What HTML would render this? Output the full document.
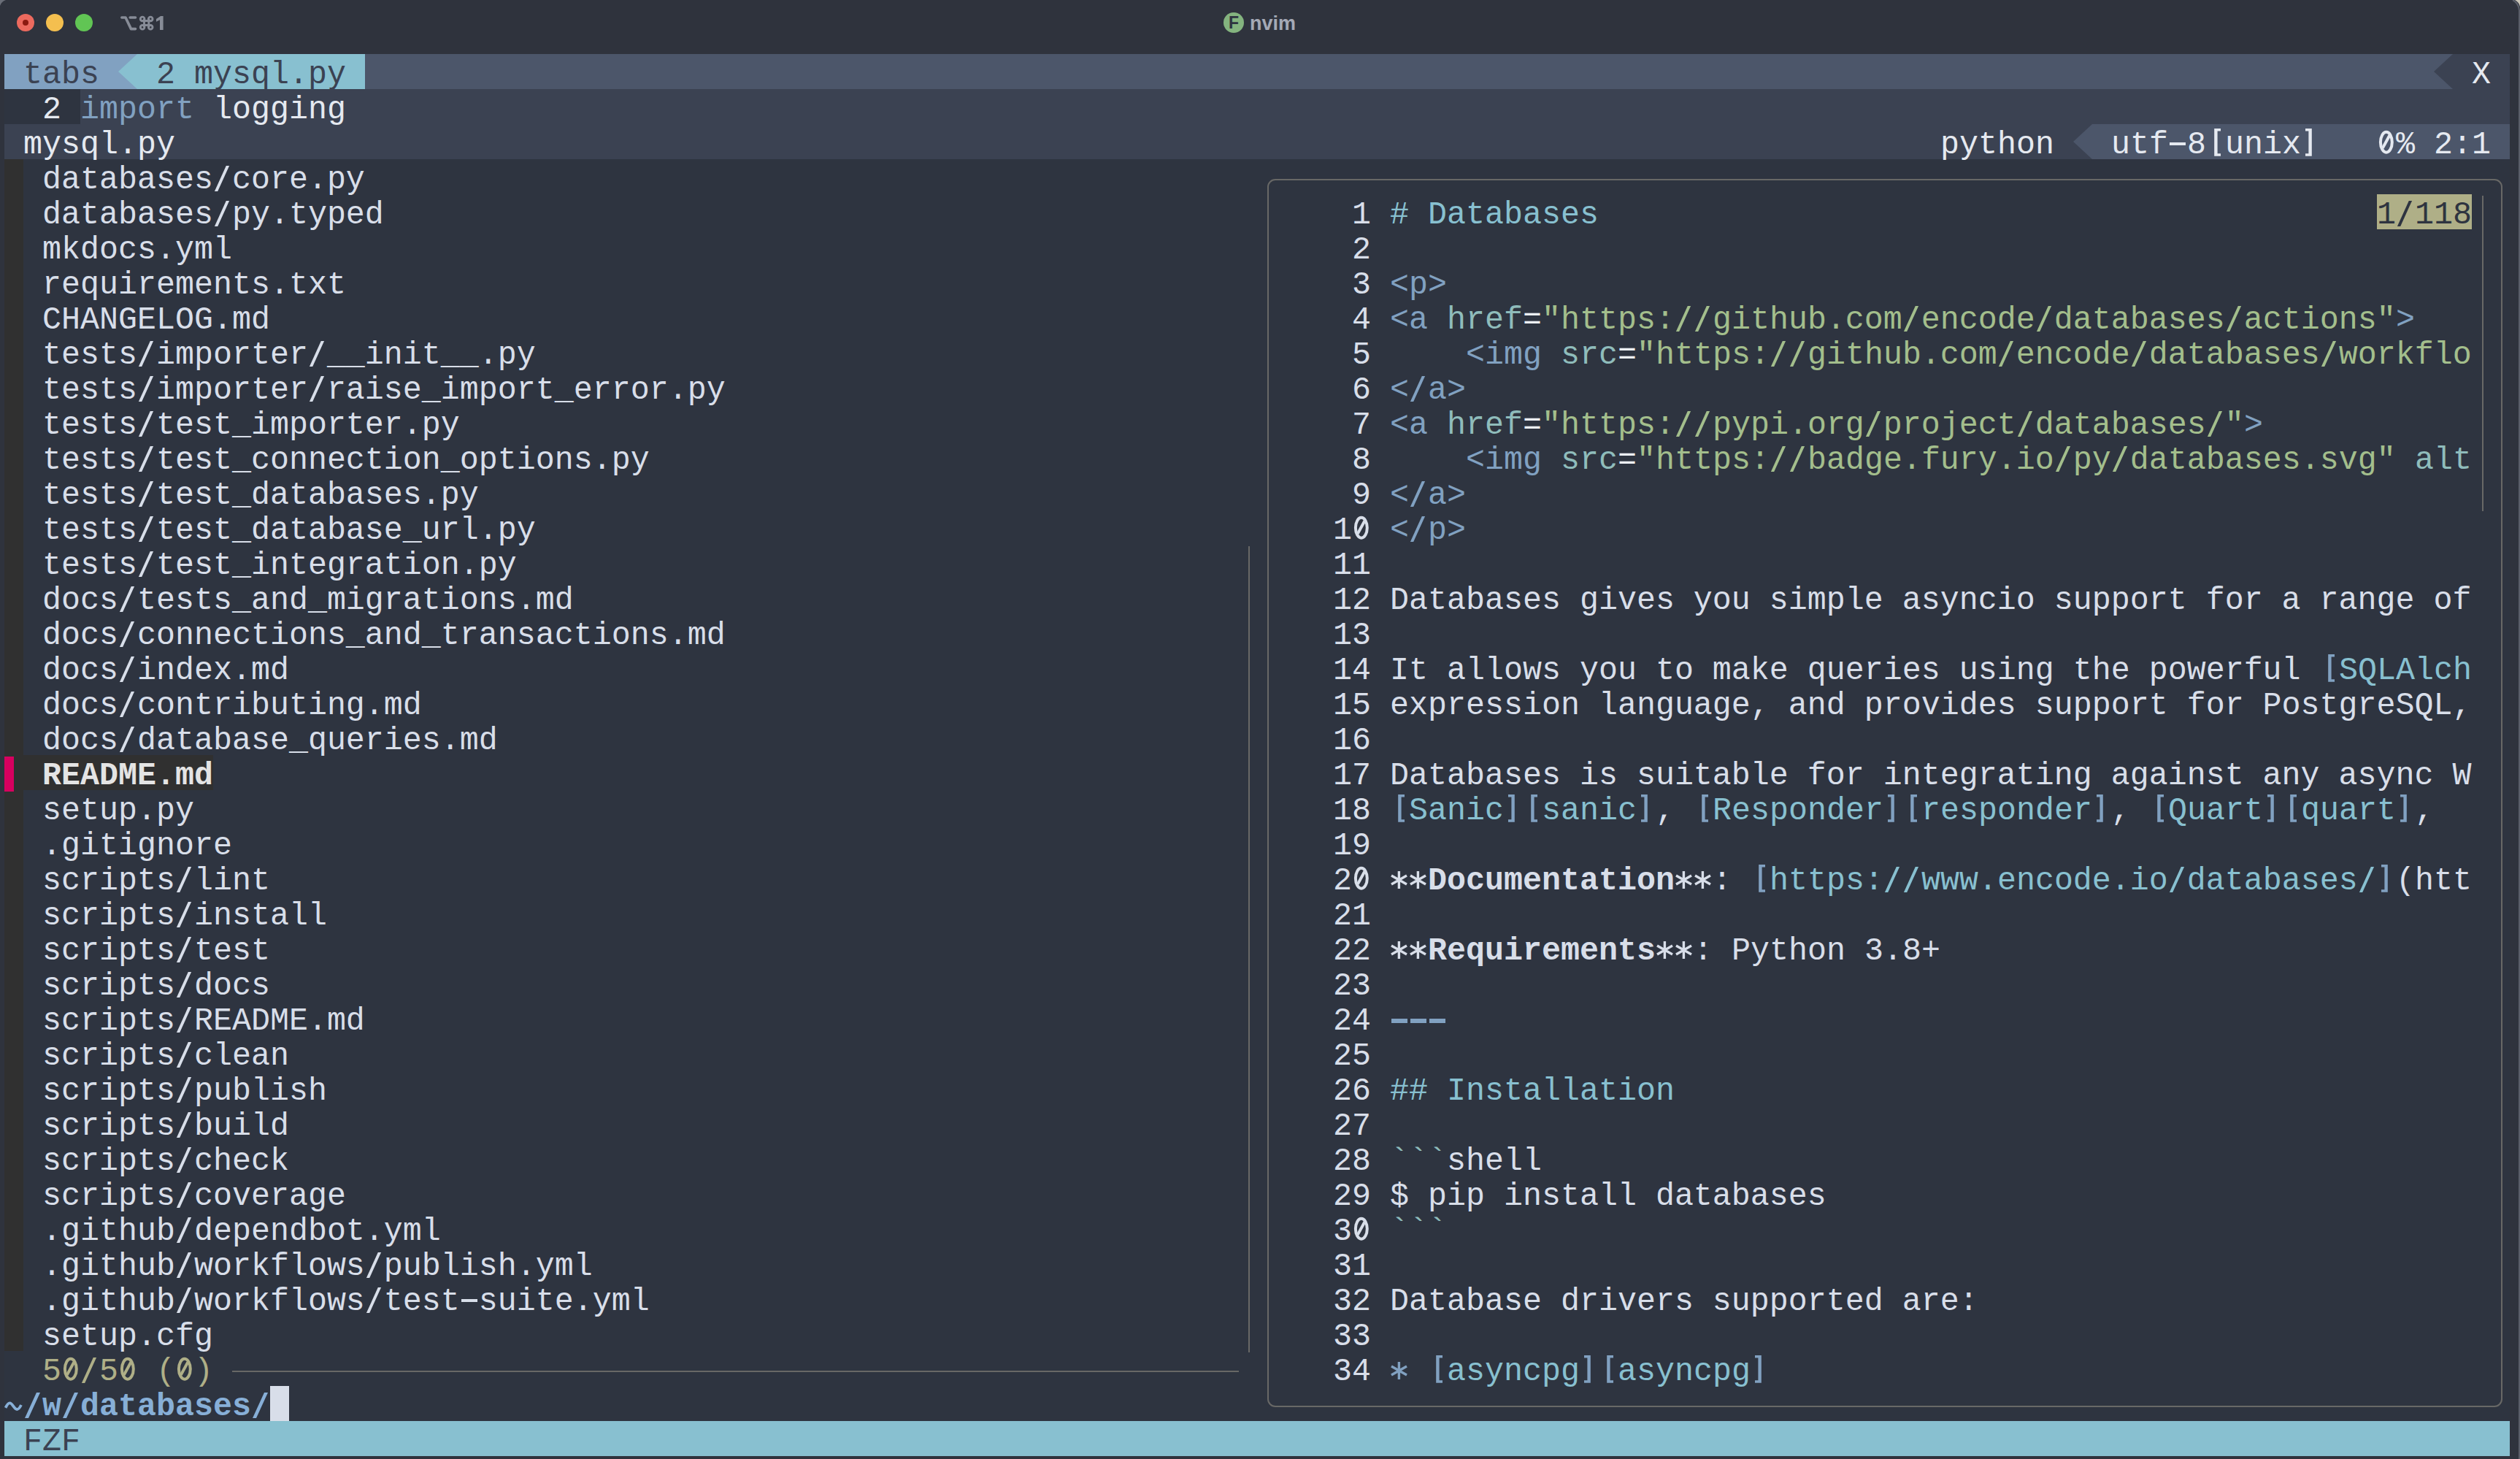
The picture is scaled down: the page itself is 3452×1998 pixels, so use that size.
<!DOCTYPE html>
<html><head><meta charset="utf-8"><title>nvim</title>
<style>
html,body{margin:0;padding:0;}
body{width:3452px;height:1998px;overflow:hidden;background:#2f333d;position:relative;}
#term{position:absolute;left:6px;top:74px;width:3432px;height:1920px;background:#2e3440;overflow:hidden;}
.b{position:absolute;height:48px;}
.t{position:absolute;white-space:pre;font-family:"Liberation Mono",monospace;font-size:43.326px;line-height:48px;height:48px;transform:scaleY(1.030);transform-origin:0 35.5px;}
.bd{font-weight:bold;}
.ln{position:absolute;background:#686866;}
</style></head><body>

<div style="position:absolute;left:23px;top:19px;width:24px;height:24px;border-radius:50%;background:#ec6a5e;"></div>
<div style="position:absolute;left:31px;top:27px;width:8px;height:8px;border-radius:50%;background:#8c1a10;"></div>
<div style="position:absolute;left:63px;top:19px;width:24px;height:24px;border-radius:50%;background:#f4bf4f;"></div>
<div style="position:absolute;left:103px;top:19px;width:24px;height:24px;border-radius:50%;background:#61c554;"></div>

<div style="position:absolute;left:3450px;top:14px;width:2px;height:1984px;background:#5a5e69"></div>
<svg style="position:absolute;left:3432px;top:0" width="20" height="20" viewBox="0 0 20 20"><path d="M13 0 Q18.5 3 20 9 L20 0 Z" fill="#c9c5b9"/><path d="M10 0 Q18 4 19 14" stroke="#5a5e69" stroke-width="2" fill="none"/></svg>
<svg style="position:absolute;left:0;top:0" width="12" height="12" viewBox="0 0 12 12"><path d="M0 0 L8 0 Q2 2 0 8 Z" fill="#6a6e78"/></svg>
<div style="position:absolute;left:1676px;top:17px;width:28px;height:28px;border-radius:50%;background:#84b47f;"></div>
<div style="position:absolute;left:1676px;top:17px;width:28px;text-align:center;font-family:'Liberation Sans',sans-serif;font-weight:bold;font-size:23px;line-height:29px;color:#2e3440;">F</div>
<div style="position:absolute;left:1712px;top:13px;font-family:'Liberation Sans',sans-serif;font-weight:bold;font-size:27px;line-height:38px;color:#a4a9b6;">nvim</div>
<svg style="position:absolute;left:160px;top:16px" width="70" height="32" viewBox="0 0 70 32">
<g fill="none" stroke="#878c97" stroke-width="3.6" stroke-linecap="round" stroke-linejoin="round">
<path d="M6.8 8 H12 L19.5 23.6 H25.5 M18.2 8 H25.5"/>
</g>
<g fill="none" stroke="#878c97" stroke-width="2.9">
<path d="M35.1 12.44 H46.2 M35.1 18.56 H46.2 M37.5 9.94 V21.3 M43.8 9.94 V21.3"/>
<circle cx="35.1" cy="9.94" r="2.8"/><circle cx="46.2" cy="9.94" r="2.8"/><circle cx="35.1" cy="21.3" r="2.8"/><circle cx="46.2" cy="21.3" r="2.8"/>
</g>
<path d="M54 10 L60 6 H63.6 V24.9 H59 V11.2 L54 13.8 Z" fill="#878c97"/>
</svg>

<div id="term">
<div class="b" style="left:0px;top:0px;width:182px;background:#81a1c1"></div>
<div class="b" style="left:182px;top:0px;width:312px;background:#88c0d0"></div>
<div class="b" style="left:494px;top:0px;width:2860px;background:#4c566a"></div>
<div class="b" style="left:3354px;top:0px;width:78px;background:#3b4252"></div>
<div class="b" style="left:104px;top:48px;width:3328px;background:#3b4252"></div>
<div class="b" style="left:0px;top:96px;width:2860px;background:#3b4252"></div>
<div class="b" style="left:2860px;top:96px;width:572px;background:#4c566a"></div>
<div class="b" style="left:0px;top:144px;width:26px;background:#303030"></div>
<div class="b" style="left:0px;top:192px;width:26px;background:#303030"></div>
<div class="b" style="left:0px;top:240px;width:26px;background:#303030"></div>
<div class="b" style="left:0px;top:288px;width:26px;background:#303030"></div>
<div class="b" style="left:0px;top:336px;width:26px;background:#303030"></div>
<div class="b" style="left:0px;top:384px;width:26px;background:#303030"></div>
<div class="b" style="left:0px;top:432px;width:26px;background:#303030"></div>
<div class="b" style="left:0px;top:480px;width:26px;background:#303030"></div>
<div class="b" style="left:0px;top:528px;width:26px;background:#303030"></div>
<div class="b" style="left:0px;top:576px;width:26px;background:#303030"></div>
<div class="b" style="left:0px;top:624px;width:26px;background:#303030"></div>
<div class="b" style="left:0px;top:672px;width:26px;background:#303030"></div>
<div class="b" style="left:0px;top:720px;width:26px;background:#303030"></div>
<div class="b" style="left:0px;top:768px;width:26px;background:#303030"></div>
<div class="b" style="left:0px;top:816px;width:26px;background:#303030"></div>
<div class="b" style="left:0px;top:864px;width:26px;background:#303030"></div>
<div class="b" style="left:0px;top:912px;width:26px;background:#303030"></div>
<div class="b" style="left:0px;top:960px;width:26px;background:#303030"></div>
<div class="b" style="left:26px;top:960px;width:260px;background:#303030"></div>
<div class="b" style="left:0px;top:1008px;width:26px;background:#303030"></div>
<div class="b" style="left:0px;top:1056px;width:26px;background:#303030"></div>
<div class="b" style="left:0px;top:1104px;width:26px;background:#303030"></div>
<div class="b" style="left:0px;top:1152px;width:26px;background:#303030"></div>
<div class="b" style="left:0px;top:1200px;width:26px;background:#303030"></div>
<div class="b" style="left:0px;top:1248px;width:26px;background:#303030"></div>
<div class="b" style="left:0px;top:1296px;width:26px;background:#303030"></div>
<div class="b" style="left:0px;top:1344px;width:26px;background:#303030"></div>
<div class="b" style="left:0px;top:1392px;width:26px;background:#303030"></div>
<div class="b" style="left:0px;top:1440px;width:26px;background:#303030"></div>
<div class="b" style="left:0px;top:1488px;width:26px;background:#303030"></div>
<div class="b" style="left:0px;top:1536px;width:26px;background:#303030"></div>
<div class="b" style="left:0px;top:1584px;width:26px;background:#303030"></div>
<div class="b" style="left:0px;top:1632px;width:26px;background:#303030"></div>
<div class="b" style="left:0px;top:1680px;width:26px;background:#303030"></div>
<div class="b" style="left:0px;top:1728px;width:26px;background:#303030"></div>
<div class="b" style="left:364px;top:1824px;width:26px;background:#d8dee9"></div>
<div class="b" style="left:0px;top:1872px;width:3432px;background:#88c0d0"></div>
<div class="b" style="left:3250px;top:192px;width:130px;background:#afaf87"></div>
<div class="t" style="left:0px;top:4.5px;color:#3b4252"> tabs </div>
<div class="t" style="left:182px;top:4.5px;color:#3b4252"> 2 mysql.py </div>
<div class="t" style="left:3380px;top:4.5px;color:#e5e9f0">X</div>
<div class="t" style="left:52px;top:52.5px;color:#e5e9f0">2</div>
<div class="t" style="left:104px;top:52.5px;color:#81a1c1">import</div>
<div class="t" style="left:286px;top:52.5px;color:#e5e9f0">logging</div>
<div class="t" style="left:26px;top:100.5px;color:#e5e9f0">mysql.py</div>
<div class="t" style="left:2652px;top:100.5px;color:#e5e9f0">python</div>
<div style="position:absolute;left:2966px;top:121px;width:22px;height:4px;background:#e5e9f0"></div>
<svg style="position:absolute;left:3016px;top:96px" width="26" height="48" viewBox="0 0 26 48"><path d="M11.2 6 H20 V9.5 H15.6 V40.3 H20 V43.8 H11.2 Z" fill="#e5e9f0"/></svg>
<svg style="position:absolute;left:3146px;top:96px" width="26" height="48" viewBox="0 0 26 48"><path d="M14.8 6 H6 V9.5 H10.4 V40.3 H6 V43.8 H14.8 Z" fill="#e5e9f0"/></svg>
<div class="t" style="left:2886px;top:100.5px;color:#e5e9f0">utf 8 unix </div>
<svg style="position:absolute;left:3250px;top:96px" width="26" height="48" viewBox="0 0 26 48"><g stroke="#e5e9f0" stroke-width="4" fill="none"><ellipse cx="12.85" cy="24.75" rx="7.95" ry="13.95"/><path d="M17.3 15.5 L7.8 32.9"/></g></svg>
<div class="t" style="left:3250px;top:100.5px;color:#e5e9f0"> % 2:1</div>
<svg style="position:absolute;left:286px;top:144px" width="26" height="48" viewBox="0 0 26 48"><polygon points="1.9,44.1 6.2,44.1 22.1,8.9 17.8,8.9" fill="#d8dee9"/></svg>
<div class="t" style="left:52px;top:148.5px;color:#d8dee9">databases core.py</div>
<svg style="position:absolute;left:286px;top:192px" width="26" height="48" viewBox="0 0 26 48"><polygon points="1.9,44.1 6.2,44.1 22.1,8.9 17.8,8.9" fill="#d8dee9"/></svg>
<div class="t" style="left:52px;top:196.5px;color:#d8dee9">databases py.typed</div>
<div class="t" style="left:52px;top:244.5px;color:#d8dee9">mkdocs.yml</div>
<div class="t" style="left:52px;top:292.5px;color:#d8dee9">requirements.txt</div>
<div class="t" style="left:52px;top:340.5px;color:#d8dee9">CHANGELOG.md</div>
<svg style="position:absolute;left:182px;top:384px" width="26" height="48" viewBox="0 0 26 48"><polygon points="1.9,44.1 6.2,44.1 22.1,8.9 17.8,8.9" fill="#d8dee9"/></svg>
<svg style="position:absolute;left:416px;top:384px" width="26" height="48" viewBox="0 0 26 48"><polygon points="1.9,44.1 6.2,44.1 22.1,8.9 17.8,8.9" fill="#d8dee9"/></svg>
<div class="t" style="left:52px;top:388.5px;color:#d8dee9">tests importer __init__.py</div>
<svg style="position:absolute;left:182px;top:432px" width="26" height="48" viewBox="0 0 26 48"><polygon points="1.9,44.1 6.2,44.1 22.1,8.9 17.8,8.9" fill="#d8dee9"/></svg>
<svg style="position:absolute;left:416px;top:432px" width="26" height="48" viewBox="0 0 26 48"><polygon points="1.9,44.1 6.2,44.1 22.1,8.9 17.8,8.9" fill="#d8dee9"/></svg>
<div class="t" style="left:52px;top:436.5px;color:#d8dee9">tests importer raise_import_error.py</div>
<svg style="position:absolute;left:182px;top:480px" width="26" height="48" viewBox="0 0 26 48"><polygon points="1.9,44.1 6.2,44.1 22.1,8.9 17.8,8.9" fill="#d8dee9"/></svg>
<div class="t" style="left:52px;top:484.5px;color:#d8dee9">tests test_importer.py</div>
<svg style="position:absolute;left:182px;top:528px" width="26" height="48" viewBox="0 0 26 48"><polygon points="1.9,44.1 6.2,44.1 22.1,8.9 17.8,8.9" fill="#d8dee9"/></svg>
<div class="t" style="left:52px;top:532.5px;color:#d8dee9">tests test_connection_options.py</div>
<svg style="position:absolute;left:182px;top:576px" width="26" height="48" viewBox="0 0 26 48"><polygon points="1.9,44.1 6.2,44.1 22.1,8.9 17.8,8.9" fill="#d8dee9"/></svg>
<div class="t" style="left:52px;top:580.5px;color:#d8dee9">tests test_databases.py</div>
<svg style="position:absolute;left:182px;top:624px" width="26" height="48" viewBox="0 0 26 48"><polygon points="1.9,44.1 6.2,44.1 22.1,8.9 17.8,8.9" fill="#d8dee9"/></svg>
<div class="t" style="left:52px;top:628.5px;color:#d8dee9">tests test_database_url.py</div>
<svg style="position:absolute;left:182px;top:672px" width="26" height="48" viewBox="0 0 26 48"><polygon points="1.9,44.1 6.2,44.1 22.1,8.9 17.8,8.9" fill="#d8dee9"/></svg>
<div class="t" style="left:52px;top:676.5px;color:#d8dee9">tests test_integration.py</div>
<svg style="position:absolute;left:156px;top:720px" width="26" height="48" viewBox="0 0 26 48"><polygon points="1.9,44.1 6.2,44.1 22.1,8.9 17.8,8.9" fill="#d8dee9"/></svg>
<div class="t" style="left:52px;top:724.5px;color:#d8dee9">docs tests_and_migrations.md</div>
<svg style="position:absolute;left:156px;top:768px" width="26" height="48" viewBox="0 0 26 48"><polygon points="1.9,44.1 6.2,44.1 22.1,8.9 17.8,8.9" fill="#d8dee9"/></svg>
<div class="t" style="left:52px;top:772.5px;color:#d8dee9">docs connections_and_transactions.md</div>
<svg style="position:absolute;left:156px;top:816px" width="26" height="48" viewBox="0 0 26 48"><polygon points="1.9,44.1 6.2,44.1 22.1,8.9 17.8,8.9" fill="#d8dee9"/></svg>
<div class="t" style="left:52px;top:820.5px;color:#d8dee9">docs index.md</div>
<svg style="position:absolute;left:156px;top:864px" width="26" height="48" viewBox="0 0 26 48"><polygon points="1.9,44.1 6.2,44.1 22.1,8.9 17.8,8.9" fill="#d8dee9"/></svg>
<div class="t" style="left:52px;top:868.5px;color:#d8dee9">docs contributing.md</div>
<svg style="position:absolute;left:156px;top:912px" width="26" height="48" viewBox="0 0 26 48"><polygon points="1.9,44.1 6.2,44.1 22.1,8.9 17.8,8.9" fill="#d8dee9"/></svg>
<div class="t" style="left:52px;top:916.5px;color:#d8dee9">docs database_queries.md</div>
<div class="t bd" style="left:52px;top:964.5px;color:#e4e4e4">README.md</div>
<div class="t" style="left:52px;top:1012.5px;color:#d8dee9">setup.py</div>
<div class="t" style="left:52px;top:1060.5px;color:#d8dee9">.gitignore</div>
<svg style="position:absolute;left:234px;top:1104px" width="26" height="48" viewBox="0 0 26 48"><polygon points="1.9,44.1 6.2,44.1 22.1,8.9 17.8,8.9" fill="#d8dee9"/></svg>
<div class="t" style="left:52px;top:1108.5px;color:#d8dee9">scripts lint</div>
<svg style="position:absolute;left:234px;top:1152px" width="26" height="48" viewBox="0 0 26 48"><polygon points="1.9,44.1 6.2,44.1 22.1,8.9 17.8,8.9" fill="#d8dee9"/></svg>
<div class="t" style="left:52px;top:1156.5px;color:#d8dee9">scripts install</div>
<svg style="position:absolute;left:234px;top:1200px" width="26" height="48" viewBox="0 0 26 48"><polygon points="1.9,44.1 6.2,44.1 22.1,8.9 17.8,8.9" fill="#d8dee9"/></svg>
<div class="t" style="left:52px;top:1204.5px;color:#d8dee9">scripts test</div>
<svg style="position:absolute;left:234px;top:1248px" width="26" height="48" viewBox="0 0 26 48"><polygon points="1.9,44.1 6.2,44.1 22.1,8.9 17.8,8.9" fill="#d8dee9"/></svg>
<div class="t" style="left:52px;top:1252.5px;color:#d8dee9">scripts docs</div>
<svg style="position:absolute;left:234px;top:1296px" width="26" height="48" viewBox="0 0 26 48"><polygon points="1.9,44.1 6.2,44.1 22.1,8.9 17.8,8.9" fill="#d8dee9"/></svg>
<div class="t" style="left:52px;top:1300.5px;color:#d8dee9">scripts README.md</div>
<svg style="position:absolute;left:234px;top:1344px" width="26" height="48" viewBox="0 0 26 48"><polygon points="1.9,44.1 6.2,44.1 22.1,8.9 17.8,8.9" fill="#d8dee9"/></svg>
<div class="t" style="left:52px;top:1348.5px;color:#d8dee9">scripts clean</div>
<svg style="position:absolute;left:234px;top:1392px" width="26" height="48" viewBox="0 0 26 48"><polygon points="1.9,44.1 6.2,44.1 22.1,8.9 17.8,8.9" fill="#d8dee9"/></svg>
<div class="t" style="left:52px;top:1396.5px;color:#d8dee9">scripts publish</div>
<svg style="position:absolute;left:234px;top:1440px" width="26" height="48" viewBox="0 0 26 48"><polygon points="1.9,44.1 6.2,44.1 22.1,8.9 17.8,8.9" fill="#d8dee9"/></svg>
<div class="t" style="left:52px;top:1444.5px;color:#d8dee9">scripts build</div>
<svg style="position:absolute;left:234px;top:1488px" width="26" height="48" viewBox="0 0 26 48"><polygon points="1.9,44.1 6.2,44.1 22.1,8.9 17.8,8.9" fill="#d8dee9"/></svg>
<div class="t" style="left:52px;top:1492.5px;color:#d8dee9">scripts check</div>
<svg style="position:absolute;left:234px;top:1536px" width="26" height="48" viewBox="0 0 26 48"><polygon points="1.9,44.1 6.2,44.1 22.1,8.9 17.8,8.9" fill="#d8dee9"/></svg>
<div class="t" style="left:52px;top:1540.5px;color:#d8dee9">scripts coverage</div>
<svg style="position:absolute;left:234px;top:1584px" width="26" height="48" viewBox="0 0 26 48"><polygon points="1.9,44.1 6.2,44.1 22.1,8.9 17.8,8.9" fill="#d8dee9"/></svg>
<div class="t" style="left:52px;top:1588.5px;color:#d8dee9">.github dependbot.yml</div>
<svg style="position:absolute;left:234px;top:1632px" width="26" height="48" viewBox="0 0 26 48"><polygon points="1.9,44.1 6.2,44.1 22.1,8.9 17.8,8.9" fill="#d8dee9"/></svg>
<svg style="position:absolute;left:494px;top:1632px" width="26" height="48" viewBox="0 0 26 48"><polygon points="1.9,44.1 6.2,44.1 22.1,8.9 17.8,8.9" fill="#d8dee9"/></svg>
<div class="t" style="left:52px;top:1636.5px;color:#d8dee9">.github workflows publish.yml</div>
<svg style="position:absolute;left:234px;top:1680px" width="26" height="48" viewBox="0 0 26 48"><polygon points="1.9,44.1 6.2,44.1 22.1,8.9 17.8,8.9" fill="#d8dee9"/></svg>
<svg style="position:absolute;left:494px;top:1680px" width="26" height="48" viewBox="0 0 26 48"><polygon points="1.9,44.1 6.2,44.1 22.1,8.9 17.8,8.9" fill="#d8dee9"/></svg>
<div style="position:absolute;left:626px;top:1705px;width:22px;height:4px;background:#d8dee9"></div>
<div class="t" style="left:52px;top:1684.5px;color:#d8dee9">.github workflows test suite.yml</div>
<div class="t" style="left:52px;top:1732.5px;color:#d8dee9">setup.cfg</div>
<svg style="position:absolute;left:78px;top:1776px" width="26" height="48" viewBox="0 0 26 48"><g stroke="#afaf87" stroke-width="4" fill="none"><ellipse cx="12.85" cy="24.75" rx="7.95" ry="13.95"/><path d="M17.3 15.5 L7.8 32.9"/></g></svg>
<svg style="position:absolute;left:104px;top:1776px" width="26" height="48" viewBox="0 0 26 48"><polygon points="1.9,44.1 6.2,44.1 22.1,8.9 17.8,8.9" fill="#afaf87"/></svg>
<svg style="position:absolute;left:156px;top:1776px" width="26" height="48" viewBox="0 0 26 48"><g stroke="#afaf87" stroke-width="4" fill="none"><ellipse cx="12.85" cy="24.75" rx="7.95" ry="13.95"/><path d="M17.3 15.5 L7.8 32.9"/></g></svg>
<svg style="position:absolute;left:234px;top:1776px" width="26" height="48" viewBox="0 0 26 48"><g stroke="#afaf87" stroke-width="4" fill="none"><ellipse cx="12.85" cy="24.75" rx="7.95" ry="13.95"/><path d="M17.3 15.5 L7.8 32.9"/></g></svg>
<div class="t" style="left:52px;top:1780.5px;color:#afaf87">5  5  ( )</div>
<svg style="position:absolute;left:0px;top:1824px;overflow:visible" width="26" height="48" viewBox="0 0 26 48"><path d="M1.6 29.9 C4 25 5.5 23.4 7.4 23.4 C11 23.4 13.5 32 17.3 32 C19.5 32 21.5 29 23 26" stroke="#87afd7" stroke-width="3.8" fill="none"/></svg>
<svg style="position:absolute;left:26px;top:1824px" width="26" height="48" viewBox="0 0 26 48"><polygon points="2,44.1 7,44.1 23,8.9 18,8.9" fill="#87afd7"/></svg>
<svg style="position:absolute;left:78px;top:1824px" width="26" height="48" viewBox="0 0 26 48"><polygon points="2,44.1 7,44.1 23,8.9 18,8.9" fill="#87afd7"/></svg>
<svg style="position:absolute;left:338px;top:1824px" width="26" height="48" viewBox="0 0 26 48"><polygon points="2,44.1 7,44.1 23,8.9 18,8.9" fill="#87afd7"/></svg>
<div class="t bd" style="left:0px;top:1828.5px;color:#87afd7">  w databases </div>
<div class="t" style="left:26px;top:1876.5px;color:#3b4252">FZF</div>
<div class="t" style="left:1846px;top:196.5px;color:#d8dee9">1</div>
<div class="t" style="left:1898px;top:196.5px;color:#88c0d0"># Databases</div>
<div class="t" style="left:1846px;top:244.5px;color:#d8dee9">2</div>
<div class="t" style="left:1846px;top:292.5px;color:#d8dee9">3</div>
<div class="t" style="left:1898px;top:292.5px;color:#81a1c1">&lt;p&gt;</div>
<div class="t" style="left:1846px;top:340.5px;color:#d8dee9">4</div>
<div class="t" style="left:1898px;top:340.5px;color:#81a1c1">&lt;a</div>
<div class="t" style="left:1976px;top:340.5px;color:#8fbcbb">href</div>
<div class="t" style="left:2080px;top:340.5px;color:#eceff4">=</div>
<svg style="position:absolute;left:2288px;top:336px" width="26" height="48" viewBox="0 0 26 48"><polygon points="1.9,44.1 6.2,44.1 22.1,8.9 17.8,8.9" fill="#a3be8c"/></svg>
<svg style="position:absolute;left:2314px;top:336px" width="26" height="48" viewBox="0 0 26 48"><polygon points="1.9,44.1 6.2,44.1 22.1,8.9 17.8,8.9" fill="#a3be8c"/></svg>
<svg style="position:absolute;left:2600px;top:336px" width="26" height="48" viewBox="0 0 26 48"><polygon points="1.9,44.1 6.2,44.1 22.1,8.9 17.8,8.9" fill="#a3be8c"/></svg>
<svg style="position:absolute;left:2782px;top:336px" width="26" height="48" viewBox="0 0 26 48"><polygon points="1.9,44.1 6.2,44.1 22.1,8.9 17.8,8.9" fill="#a3be8c"/></svg>
<svg style="position:absolute;left:3042px;top:336px" width="26" height="48" viewBox="0 0 26 48"><polygon points="1.9,44.1 6.2,44.1 22.1,8.9 17.8,8.9" fill="#a3be8c"/></svg>
<div class="t" style="left:2106px;top:340.5px;color:#a3be8c">&quot;https:  github.com encode databases actions&quot;</div>
<div class="t" style="left:3276px;top:340.5px;color:#81a1c1">&gt;</div>
<div class="t" style="left:1846px;top:388.5px;color:#d8dee9">5</div>
<div class="t" style="left:2002px;top:388.5px;color:#81a1c1">&lt;img</div>
<div class="t" style="left:2132px;top:388.5px;color:#8fbcbb">src</div>
<div class="t" style="left:2210px;top:388.5px;color:#eceff4">=</div>
<svg style="position:absolute;left:2418px;top:384px" width="26" height="48" viewBox="0 0 26 48"><polygon points="1.9,44.1 6.2,44.1 22.1,8.9 17.8,8.9" fill="#a3be8c"/></svg>
<svg style="position:absolute;left:2444px;top:384px" width="26" height="48" viewBox="0 0 26 48"><polygon points="1.9,44.1 6.2,44.1 22.1,8.9 17.8,8.9" fill="#a3be8c"/></svg>
<svg style="position:absolute;left:2730px;top:384px" width="26" height="48" viewBox="0 0 26 48"><polygon points="1.9,44.1 6.2,44.1 22.1,8.9 17.8,8.9" fill="#a3be8c"/></svg>
<svg style="position:absolute;left:2912px;top:384px" width="26" height="48" viewBox="0 0 26 48"><polygon points="1.9,44.1 6.2,44.1 22.1,8.9 17.8,8.9" fill="#a3be8c"/></svg>
<svg style="position:absolute;left:3172px;top:384px" width="26" height="48" viewBox="0 0 26 48"><polygon points="1.9,44.1 6.2,44.1 22.1,8.9 17.8,8.9" fill="#a3be8c"/></svg>
<div class="t" style="left:2236px;top:388.5px;color:#a3be8c">&quot;https:  github.com encode databases workflo</div>
<div class="t" style="left:1846px;top:436.5px;color:#d8dee9">6</div>
<svg style="position:absolute;left:1924px;top:432px" width="26" height="48" viewBox="0 0 26 48"><polygon points="1.9,44.1 6.2,44.1 22.1,8.9 17.8,8.9" fill="#81a1c1"/></svg>
<div class="t" style="left:1898px;top:436.5px;color:#81a1c1">&lt; a&gt;</div>
<div class="t" style="left:1846px;top:484.5px;color:#d8dee9">7</div>
<div class="t" style="left:1898px;top:484.5px;color:#81a1c1">&lt;a</div>
<div class="t" style="left:1976px;top:484.5px;color:#8fbcbb">href</div>
<div class="t" style="left:2080px;top:484.5px;color:#eceff4">=</div>
<svg style="position:absolute;left:2288px;top:480px" width="26" height="48" viewBox="0 0 26 48"><polygon points="1.9,44.1 6.2,44.1 22.1,8.9 17.8,8.9" fill="#a3be8c"/></svg>
<svg style="position:absolute;left:2314px;top:480px" width="26" height="48" viewBox="0 0 26 48"><polygon points="1.9,44.1 6.2,44.1 22.1,8.9 17.8,8.9" fill="#a3be8c"/></svg>
<svg style="position:absolute;left:2548px;top:480px" width="26" height="48" viewBox="0 0 26 48"><polygon points="1.9,44.1 6.2,44.1 22.1,8.9 17.8,8.9" fill="#a3be8c"/></svg>
<svg style="position:absolute;left:2756px;top:480px" width="26" height="48" viewBox="0 0 26 48"><polygon points="1.9,44.1 6.2,44.1 22.1,8.9 17.8,8.9" fill="#a3be8c"/></svg>
<svg style="position:absolute;left:3016px;top:480px" width="26" height="48" viewBox="0 0 26 48"><polygon points="1.9,44.1 6.2,44.1 22.1,8.9 17.8,8.9" fill="#a3be8c"/></svg>
<div class="t" style="left:2106px;top:484.5px;color:#a3be8c">&quot;https:  pypi.org project databases &quot;</div>
<div class="t" style="left:3068px;top:484.5px;color:#81a1c1">&gt;</div>
<div class="t" style="left:1846px;top:532.5px;color:#d8dee9">8</div>
<div class="t" style="left:2002px;top:532.5px;color:#81a1c1">&lt;img</div>
<div class="t" style="left:2132px;top:532.5px;color:#8fbcbb">src</div>
<div class="t" style="left:2210px;top:532.5px;color:#eceff4">=</div>
<svg style="position:absolute;left:2418px;top:528px" width="26" height="48" viewBox="0 0 26 48"><polygon points="1.9,44.1 6.2,44.1 22.1,8.9 17.8,8.9" fill="#a3be8c"/></svg>
<svg style="position:absolute;left:2444px;top:528px" width="26" height="48" viewBox="0 0 26 48"><polygon points="1.9,44.1 6.2,44.1 22.1,8.9 17.8,8.9" fill="#a3be8c"/></svg>
<svg style="position:absolute;left:2808px;top:528px" width="26" height="48" viewBox="0 0 26 48"><polygon points="1.9,44.1 6.2,44.1 22.1,8.9 17.8,8.9" fill="#a3be8c"/></svg>
<svg style="position:absolute;left:2886px;top:528px" width="26" height="48" viewBox="0 0 26 48"><polygon points="1.9,44.1 6.2,44.1 22.1,8.9 17.8,8.9" fill="#a3be8c"/></svg>
<div class="t" style="left:2236px;top:532.5px;color:#a3be8c">&quot;https:  badge.fury.io py databases.svg&quot;</div>
<div class="t" style="left:3302px;top:532.5px;color:#8fbcbb">alt</div>
<div class="t" style="left:1846px;top:580.5px;color:#d8dee9">9</div>
<svg style="position:absolute;left:1924px;top:576px" width="26" height="48" viewBox="0 0 26 48"><polygon points="1.9,44.1 6.2,44.1 22.1,8.9 17.8,8.9" fill="#81a1c1"/></svg>
<div class="t" style="left:1898px;top:580.5px;color:#81a1c1">&lt; a&gt;</div>
<svg style="position:absolute;left:1846px;top:624px" width="26" height="48" viewBox="0 0 26 48"><g stroke="#d8dee9" stroke-width="4" fill="none"><ellipse cx="12.85" cy="24.75" rx="7.95" ry="13.95"/><path d="M17.3 15.5 L7.8 32.9"/></g></svg>
<div class="t" style="left:1820px;top:628.5px;color:#d8dee9">1 </div>
<svg style="position:absolute;left:1924px;top:624px" width="26" height="48" viewBox="0 0 26 48"><polygon points="1.9,44.1 6.2,44.1 22.1,8.9 17.8,8.9" fill="#81a1c1"/></svg>
<div class="t" style="left:1898px;top:628.5px;color:#81a1c1">&lt; p&gt;</div>
<div class="t" style="left:1820px;top:676.5px;color:#d8dee9">11</div>
<div class="t" style="left:1820px;top:724.5px;color:#d8dee9">12</div>
<div class="t" style="left:1898px;top:724.5px;color:#d8dee9">Databases gives you simple asyncio support for a range of</div>
<div class="t" style="left:1820px;top:772.5px;color:#d8dee9">13</div>
<div class="t" style="left:1820px;top:820.5px;color:#d8dee9">14</div>
<div class="t" style="left:1898px;top:820.5px;color:#d8dee9">It allows you to make queries using the powerful </div>
<svg style="position:absolute;left:3172px;top:816px" width="26" height="48" viewBox="0 0 26 48"><path d="M11.2 6 H20 V9.5 H15.6 V40.3 H20 V43.8 H11.2 Z" fill="#81a1c1"/></svg>
<div class="t" style="left:3198px;top:820.5px;color:#88c0d0">SQLAlch</div>
<div class="t" style="left:1820px;top:868.5px;color:#d8dee9">15</div>
<div class="t" style="left:1898px;top:868.5px;color:#d8dee9">expression language, and provides support for PostgreSQL,</div>
<div class="t" style="left:1820px;top:916.5px;color:#d8dee9">16</div>
<div class="t" style="left:1820px;top:964.5px;color:#d8dee9">17</div>
<div class="t" style="left:1898px;top:964.5px;color:#d8dee9">Databases is suitable for integrating against any async W</div>
<div class="t" style="left:1820px;top:1012.5px;color:#d8dee9">18</div>
<svg style="position:absolute;left:1898px;top:1008px" width="26" height="48" viewBox="0 0 26 48"><path d="M11.2 6 H20 V9.5 H15.6 V40.3 H20 V43.8 H11.2 Z" fill="#81a1c1"/></svg>
<div class="t" style="left:1924px;top:1012.5px;color:#88c0d0">Sanic</div>
<svg style="position:absolute;left:2054px;top:1008px" width="26" height="48" viewBox="0 0 26 48"><path d="M14.8 6 H6 V9.5 H10.4 V40.3 H6 V43.8 H14.8 Z" fill="#81a1c1"/></svg>
<svg style="position:absolute;left:2080px;top:1008px" width="26" height="48" viewBox="0 0 26 48"><path d="M11.2 6 H20 V9.5 H15.6 V40.3 H20 V43.8 H11.2 Z" fill="#81a1c1"/></svg>
<div class="t" style="left:2106px;top:1012.5px;color:#88c0d0">sanic</div>
<svg style="position:absolute;left:2236px;top:1008px" width="26" height="48" viewBox="0 0 26 48"><path d="M14.8 6 H6 V9.5 H10.4 V40.3 H6 V43.8 H14.8 Z" fill="#81a1c1"/></svg>
<div class="t" style="left:2262px;top:1012.5px;color:#d8dee9">, </div>
<svg style="position:absolute;left:2314px;top:1008px" width="26" height="48" viewBox="0 0 26 48"><path d="M11.2 6 H20 V9.5 H15.6 V40.3 H20 V43.8 H11.2 Z" fill="#81a1c1"/></svg>
<div class="t" style="left:2340px;top:1012.5px;color:#88c0d0">Responder</div>
<svg style="position:absolute;left:2574px;top:1008px" width="26" height="48" viewBox="0 0 26 48"><path d="M14.8 6 H6 V9.5 H10.4 V40.3 H6 V43.8 H14.8 Z" fill="#81a1c1"/></svg>
<svg style="position:absolute;left:2600px;top:1008px" width="26" height="48" viewBox="0 0 26 48"><path d="M11.2 6 H20 V9.5 H15.6 V40.3 H20 V43.8 H11.2 Z" fill="#81a1c1"/></svg>
<div class="t" style="left:2626px;top:1012.5px;color:#88c0d0">responder</div>
<svg style="position:absolute;left:2860px;top:1008px" width="26" height="48" viewBox="0 0 26 48"><path d="M14.8 6 H6 V9.5 H10.4 V40.3 H6 V43.8 H14.8 Z" fill="#81a1c1"/></svg>
<div class="t" style="left:2886px;top:1012.5px;color:#d8dee9">, </div>
<svg style="position:absolute;left:2938px;top:1008px" width="26" height="48" viewBox="0 0 26 48"><path d="M11.2 6 H20 V9.5 H15.6 V40.3 H20 V43.8 H11.2 Z" fill="#81a1c1"/></svg>
<div class="t" style="left:2964px;top:1012.5px;color:#88c0d0">Quart</div>
<svg style="position:absolute;left:3094px;top:1008px" width="26" height="48" viewBox="0 0 26 48"><path d="M14.8 6 H6 V9.5 H10.4 V40.3 H6 V43.8 H14.8 Z" fill="#81a1c1"/></svg>
<svg style="position:absolute;left:3120px;top:1008px" width="26" height="48" viewBox="0 0 26 48"><path d="M11.2 6 H20 V9.5 H15.6 V40.3 H20 V43.8 H11.2 Z" fill="#81a1c1"/></svg>
<div class="t" style="left:3146px;top:1012.5px;color:#88c0d0">quart</div>
<svg style="position:absolute;left:3276px;top:1008px" width="26" height="48" viewBox="0 0 26 48"><path d="M14.8 6 H6 V9.5 H10.4 V40.3 H6 V43.8 H14.8 Z" fill="#81a1c1"/></svg>
<div class="t" style="left:3302px;top:1012.5px;color:#d8dee9">,</div>
<div class="t" style="left:1820px;top:1060.5px;color:#d8dee9">19</div>
<svg style="position:absolute;left:1846px;top:1104px" width="26" height="48" viewBox="0 0 26 48"><g stroke="#d8dee9" stroke-width="4" fill="none"><ellipse cx="12.85" cy="24.75" rx="7.95" ry="13.95"/><path d="M17.3 15.5 L7.8 32.9"/></g></svg>
<div class="t" style="left:1820px;top:1108.5px;color:#d8dee9">2 </div>
<svg style="position:absolute;left:1898px;top:1104px" width="26" height="48" viewBox="0 0 26 48"><path d="M12.4 15 V39 M2 21 L23 33 M2 33 L23 21" stroke="#d8dee9" stroke-width="3.4" fill="none"/></svg>
<svg style="position:absolute;left:1924px;top:1104px" width="26" height="48" viewBox="0 0 26 48"><path d="M12.4 15 V39 M2 21 L23 33 M2 33 L23 21" stroke="#d8dee9" stroke-width="3.4" fill="none"/></svg>
<div class="t bd" style="left:1950px;top:1108.5px;color:#d8dee9">Documentation</div>
<svg style="position:absolute;left:2288px;top:1104px" width="26" height="48" viewBox="0 0 26 48"><path d="M12.4 15 V39 M2 21 L23 33 M2 33 L23 21" stroke="#d8dee9" stroke-width="3.4" fill="none"/></svg>
<svg style="position:absolute;left:2314px;top:1104px" width="26" height="48" viewBox="0 0 26 48"><path d="M12.4 15 V39 M2 21 L23 33 M2 33 L23 21" stroke="#d8dee9" stroke-width="3.4" fill="none"/></svg>
<div class="t" style="left:2340px;top:1108.5px;color:#d8dee9">: </div>
<svg style="position:absolute;left:2392px;top:1104px" width="26" height="48" viewBox="0 0 26 48"><path d="M11.2 6 H20 V9.5 H15.6 V40.3 H20 V43.8 H11.2 Z" fill="#81a1c1"/></svg>
<svg style="position:absolute;left:2574px;top:1104px" width="26" height="48" viewBox="0 0 26 48"><polygon points="1.9,44.1 6.2,44.1 22.1,8.9 17.8,8.9" fill="#88c0d0"/></svg>
<svg style="position:absolute;left:2600px;top:1104px" width="26" height="48" viewBox="0 0 26 48"><polygon points="1.9,44.1 6.2,44.1 22.1,8.9 17.8,8.9" fill="#88c0d0"/></svg>
<svg style="position:absolute;left:2964px;top:1104px" width="26" height="48" viewBox="0 0 26 48"><polygon points="1.9,44.1 6.2,44.1 22.1,8.9 17.8,8.9" fill="#88c0d0"/></svg>
<svg style="position:absolute;left:3224px;top:1104px" width="26" height="48" viewBox="0 0 26 48"><polygon points="1.9,44.1 6.2,44.1 22.1,8.9 17.8,8.9" fill="#88c0d0"/></svg>
<div class="t" style="left:2418px;top:1108.5px;color:#88c0d0">https:  www.encode.io databases </div>
<svg style="position:absolute;left:3250px;top:1104px" width="26" height="48" viewBox="0 0 26 48"><path d="M14.8 6 H6 V9.5 H10.4 V40.3 H6 V43.8 H14.8 Z" fill="#81a1c1"/></svg>
<div class="t" style="left:3276px;top:1108.5px;color:#d8dee9">(htt</div>
<div class="t" style="left:1820px;top:1156.5px;color:#d8dee9">21</div>
<div class="t" style="left:1820px;top:1204.5px;color:#d8dee9">22</div>
<svg style="position:absolute;left:1898px;top:1200px" width="26" height="48" viewBox="0 0 26 48"><path d="M12.4 15 V39 M2 21 L23 33 M2 33 L23 21" stroke="#d8dee9" stroke-width="3.4" fill="none"/></svg>
<svg style="position:absolute;left:1924px;top:1200px" width="26" height="48" viewBox="0 0 26 48"><path d="M12.4 15 V39 M2 21 L23 33 M2 33 L23 21" stroke="#d8dee9" stroke-width="3.4" fill="none"/></svg>
<div class="t bd" style="left:1950px;top:1204.5px;color:#d8dee9">Requirements</div>
<svg style="position:absolute;left:2262px;top:1200px" width="26" height="48" viewBox="0 0 26 48"><path d="M12.4 15 V39 M2 21 L23 33 M2 33 L23 21" stroke="#d8dee9" stroke-width="3.4" fill="none"/></svg>
<svg style="position:absolute;left:2288px;top:1200px" width="26" height="48" viewBox="0 0 26 48"><path d="M12.4 15 V39 M2 21 L23 33 M2 33 L23 21" stroke="#d8dee9" stroke-width="3.4" fill="none"/></svg>
<div class="t" style="left:2314px;top:1204.5px;color:#d8dee9">: Python 3.8+</div>
<div class="t" style="left:1820px;top:1252.5px;color:#d8dee9">23</div>
<div class="t" style="left:1820px;top:1300.5px;color:#d8dee9">24</div>
<div style="position:absolute;left:1900px;top:1321px;width:22px;height:6px;background:#81a1c1"></div>
<div style="position:absolute;left:1926px;top:1321px;width:22px;height:6px;background:#81a1c1"></div>
<div style="position:absolute;left:1952px;top:1321px;width:22px;height:6px;background:#81a1c1"></div>
<div class="t" style="left:1820px;top:1348.5px;color:#d8dee9">25</div>
<div class="t" style="left:1820px;top:1396.5px;color:#d8dee9">26</div>
<div class="t" style="left:1898px;top:1396.5px;color:#88c0d0">## Installation</div>
<div class="t" style="left:1820px;top:1444.5px;color:#d8dee9">27</div>
<div class="t" style="left:1820px;top:1492.5px;color:#d8dee9">28</div>
<div class="t" style="left:1898px;top:1492.5px;color:#8fbcbb">```</div>
<div class="t" style="left:1976px;top:1492.5px;color:#d8dee9">shell</div>
<div class="t" style="left:1820px;top:1540.5px;color:#d8dee9">29</div>
<div class="t" style="left:1898px;top:1540.5px;color:#d8dee9">$ pip install databases</div>
<svg style="position:absolute;left:1846px;top:1584px" width="26" height="48" viewBox="0 0 26 48"><g stroke="#d8dee9" stroke-width="4" fill="none"><ellipse cx="12.85" cy="24.75" rx="7.95" ry="13.95"/><path d="M17.3 15.5 L7.8 32.9"/></g></svg>
<div class="t" style="left:1820px;top:1588.5px;color:#d8dee9">3 </div>
<div class="t" style="left:1898px;top:1588.5px;color:#8fbcbb">```</div>
<div class="t" style="left:1820px;top:1636.5px;color:#d8dee9">31</div>
<div class="t" style="left:1820px;top:1684.5px;color:#d8dee9">32</div>
<div class="t" style="left:1898px;top:1684.5px;color:#d8dee9">Database drivers supported are:</div>
<div class="t" style="left:1820px;top:1732.5px;color:#d8dee9">33</div>
<div class="t" style="left:1820px;top:1780.5px;color:#d8dee9">34</div>
<svg style="position:absolute;left:1898px;top:1776px" width="26" height="48" viewBox="0 0 26 48"><path d="M12.4 15 V39 M2 21 L23 33 M2 33 L23 21" stroke="#81a1c1" stroke-width="3.4" fill="none"/></svg>
<svg style="position:absolute;left:1950px;top:1776px" width="26" height="48" viewBox="0 0 26 48"><path d="M11.2 6 H20 V9.5 H15.6 V40.3 H20 V43.8 H11.2 Z" fill="#81a1c1"/></svg>
<div class="t" style="left:1976px;top:1780.5px;color:#88c0d0">asyncpg</div>
<svg style="position:absolute;left:2158px;top:1776px" width="26" height="48" viewBox="0 0 26 48"><path d="M14.8 6 H6 V9.5 H10.4 V40.3 H6 V43.8 H14.8 Z" fill="#81a1c1"/></svg>
<svg style="position:absolute;left:2184px;top:1776px" width="26" height="48" viewBox="0 0 26 48"><path d="M11.2 6 H20 V9.5 H15.6 V40.3 H20 V43.8 H11.2 Z" fill="#81a1c1"/></svg>
<div class="t" style="left:2210px;top:1780.5px;color:#88c0d0">asyncpg</div>
<svg style="position:absolute;left:2392px;top:1776px" width="26" height="48" viewBox="0 0 26 48"><path d="M14.8 6 H6 V9.5 H10.4 V40.3 H6 V43.8 H14.8 Z" fill="#81a1c1"/></svg>
<svg style="position:absolute;left:3276px;top:192px" width="26" height="48" viewBox="0 0 26 48"><polygon points="1.9,44.1 6.2,44.1 22.1,8.9 17.8,8.9" fill="#2e3440"/></svg>
<div class="t" style="left:3250px;top:196.5px;color:#2e3440">1 118</div>
<svg style="position:absolute;left:156px;top:0px" width="26" height="48" viewBox="0 0 26 48"><path d="M26 0 L0 24 L26 48 Z" fill="#88c0d0"/></svg>
<svg style="position:absolute;left:3328px;top:0px" width="26" height="48" viewBox="0 0 26 48"><path d="M26 0 L0 24 L26 48 Z" fill="#3b4252"/></svg>
<svg style="position:absolute;left:2834px;top:96px" width="26" height="48" viewBox="0 0 26 48"><path d="M26 0 L0 24 L26 48 Z" fill="#4c566a"/></svg>
<div style="position:absolute;left:1730px;top:171px;width:1692px;height:1682px;border:2px solid #686866;border-radius:11px;box-sizing:border-box"></div>
<div class="ln" style="left:3394px;top:194px;width:2px;height:432px"></div>
<div class="ln" style="left:1704px;top:674px;width:2px;height:1104px"></div>
<div class="ln" style="left:312px;top:1803px;width:1379px;height:2px"></div>
<div style="position:absolute;left:0;top:962px;width:13px;height:48px;background:#d7005f"></div>
</div>
</body></html>
